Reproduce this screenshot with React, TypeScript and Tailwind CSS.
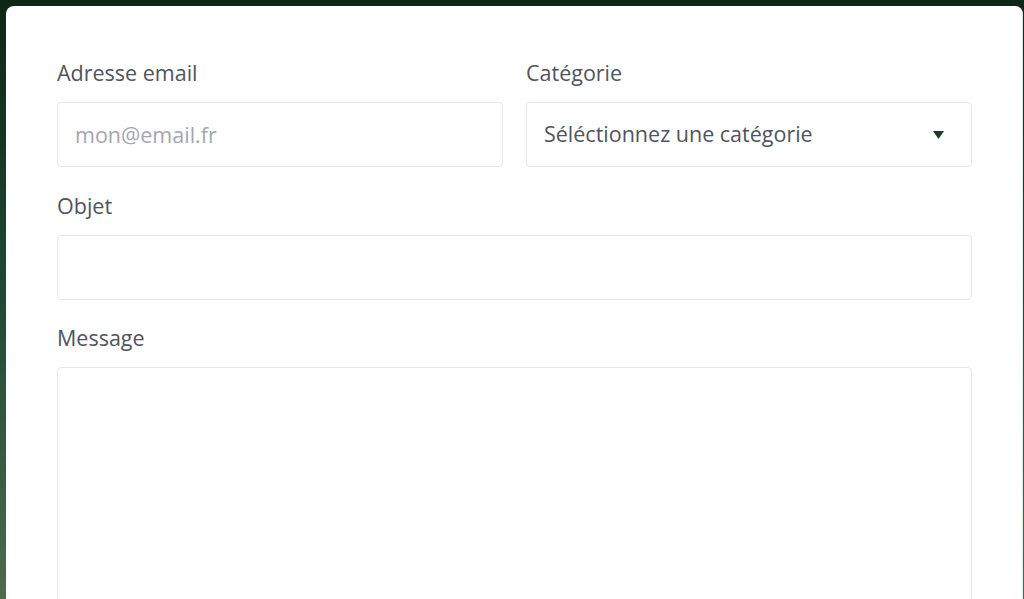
export default function App() {
  return (
    <div className="min-h-screen h-[599px] overflow-hidden bg-gradient-to-b from-[#0e2616] via-[#1f4a35] to-[#4d6b4d] pt-[6px] pl-[6px] pr-[1px]" style={{ fontFamily: "'Open Sans', 'Noto Sans', sans-serif" }}>
      <div className="h-full bg-white rounded-t-lg border-r border-[#e7e8ec] pl-[51px] pr-[50px] pt-[53px]">
        <div className="grid grid-cols-2 gap-x-[23px]">
          <div>
            <label className="block text-[21.5px] leading-7 text-[#4f5460] mb-[15px]">Adresse email</label>
            <input
              type="email"
              placeholder="mon@email.fr"
              className="w-full h-[65px] px-[17px] rounded border border-[#e5e7eb] text-[21.5px] text-[#4f5460] placeholder:text-[#a3a7ae] outline-none"
            />
          </div>
          <div>
            <label className="block text-[21.5px] leading-7 text-[#4f5460] mb-[15px]">Catégorie</label>
            <div className="w-full h-[65px] px-[17px] rounded border border-[#e5e7eb] flex items-center justify-between">
              <span className="text-[21.5px] text-[#4f5460]">Séléctionnez une catégorie</span>
              <svg width="11" height="8" viewBox="0 0 11 8" className="mr-[10px]">
                <path d="M0 0 H11 L5.5 8 Z" fill="#1d3a26" />
              </svg>
            </div>
          </div>
        </div>
        <div className="mt-[25px]">
          <label className="block text-[21.5px] leading-7 text-[#4f5460] mb-[15px]">Objet</label>
          <input type="text" className="w-full h-[65px] px-[17px] rounded border border-[#e5e7eb] text-[21.5px] outline-none" />
        </div>
        <div className="mt-[24px]">
          <label className="block text-[21.5px] leading-7 text-[#4f5460] mb-[15px]">Message</label>
          <textarea className="w-full h-[260px] px-[17px] py-3 rounded border border-[#e5e7eb] text-[21.5px] outline-none resize-none" />
        </div>
      </div>
    </div>
  );
}
